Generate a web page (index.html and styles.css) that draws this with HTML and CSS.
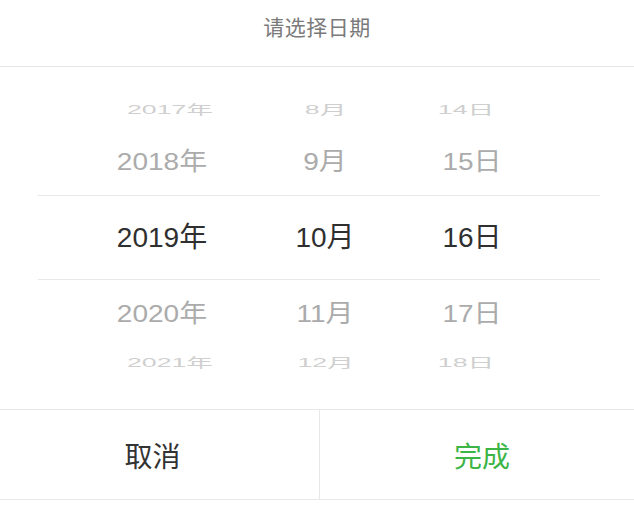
FILE: index.html
```html
<!DOCTYPE html>
<html lang="zh-CN">
<head>
<meta charset="utf-8">
<title>请选择日期</title>
<link rel="stylesheet" href="styles.css">
</head>
<body>
<div class="sheet">
  <div class="header"><span class="title">请选择日期</span></div>
  <div class="picker">
    <div class="row far top">
      <span class="cell year">2017年</span><span class="cell month">8月</span><span class="cell day">14日</span>
    </div>
    <div class="row near upper">
      <span class="cell year">2018年</span><span class="cell month">9月</span><span class="cell day">15日</span>
    </div>
    <div class="row current">
      <span class="cell year">2019年</span><span class="cell month">10月</span><span class="cell day">16日</span>
    </div>
    <div class="row near lower">
      <span class="cell year">2020年</span><span class="cell month">11月</span><span class="cell day">17日</span>
    </div>
    <div class="row far bottom">
      <span class="cell year">2021年</span><span class="cell month">12月</span><span class="cell day">18日</span>
    </div>
  </div>
  <div class="footer">
    <div class="btn cancel">取消</div>
    <div class="btn confirm">完成</div>
  </div>
</div>
</body>
</html>
```

FILE: styles.css
```css
* { box-sizing: border-box; }
html, body {
  margin: 0;
  padding: 0;
  background: #ffffff;
}
body {
  font-family: "Liberation Sans", "Noto Sans CJK SC", sans-serif;
  width: 634px;
  height: 510px;
  overflow: hidden;
}
.sheet {
  display: flex;
  flex-direction: column;
}
.header {
  height: 67px;
  padding-top: 15px;
  border-bottom: 1px solid #e6e6e6;
  text-align: center;
}
.title {
  font-size: 21px;
  line-height: 26px;
  color: #7a7a7a;
  letter-spacing: 0.5px;
}
.picker {
  padding-top: 21px;
  padding-bottom: 31px;
  display: flex;
  flex-direction: column;
}
.row {
  display: flex;
  align-items: center;
  margin: 0 34px 0 38px;
  padding-left: 54px;
}
.cell {
  display: block;
  text-align: center;
  font-size: 28px;
  line-height: 32px;
  white-space: nowrap;
}
.cell.year { width: 140px; }
.cell.month { width: 140px; margin-left: 23px; }
.cell.day { width: 140px; margin-left: 7px; }

.row.far {
  color: #cfcfcf;
  transform: scaleX(0.955);
  transform-origin: 302px 50%;
}
.row.far .cell { transform: scaleY(0.46); }
.row.far.top { height: 44px; }
.row.far.bottom { height: 30px; }

.row.near { color: #ababab; }
.row.near .cell { transform: scaleY(0.88); }
.row.near.upper { height: 63px; padding-bottom: 3px; }
.row.near.lower { height: 68px; }

.row.current {
  height: 85px;
  border-top: 1px solid #e8e8e8;
  border-bottom: 1px solid #e8e8e8;
  color: #2f2f2f;
  padding-top: 1px;
}

.footer {
  display: flex;
  height: 91px;
  border-top: 1px solid #e8e8e8;
  border-bottom: 1px solid #e8e8e8;
}
.btn {
  flex: 1;
  display: flex;
  align-items: center;
  justify-content: center;
  font-size: 28px;
  line-height: 32px;
  font-family: "Noto Sans CJK SC", sans-serif;
}
.btn.cancel {
  color: #333333;
  border-right: 1px solid #e8e8e8;
  padding-right: 14px;
  flex: 0 0 320px;
}
.btn.confirm {
  color: #3cb446;
  padding-left: 10px;
}
```
